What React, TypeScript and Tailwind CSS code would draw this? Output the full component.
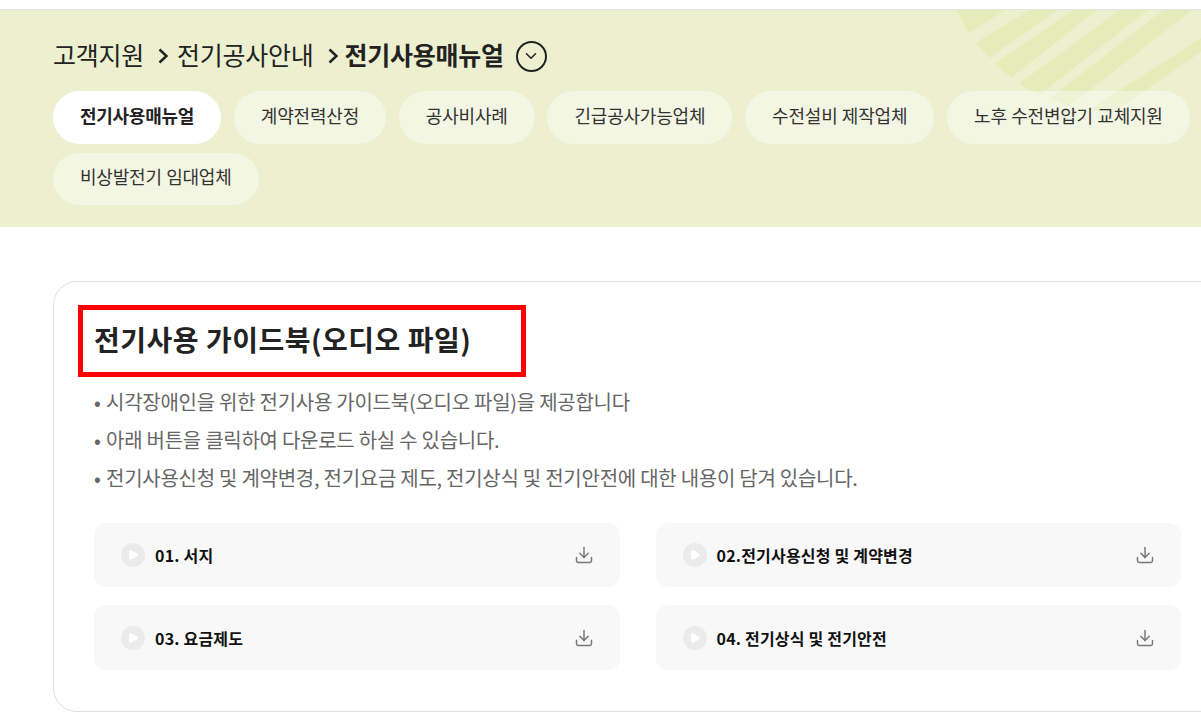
import { ChevronDown, Download, Play } from "lucide-react";

const TABS = [
  "전기사용매뉴얼",
  "계약전력산정",
  "공사비사례",
  "긴급공사가능업체",
  "수전설비 제작업체",
  "노후 수전변압기 교체지원",
  "비상발전기 임대업체",
];

const NOTES = [
  "시각장애인을 위한 전기사용 가이드북(오디오 파일)을 제공합니다",
  "아래 버튼을 클릭하여 다운로드 하실 수 있습니다.",
  "전기사용신청 및 계약변경, 전기요금 제도, 전기상식 및 전기안전에 대한 내용이 담겨 있습니다.",
];

const FILES = ["01. 서지", "02.전기사용신청 및 계약변경", "03. 요금제도", "04. 전기상식 및 전기안전"];

function Stripes() {
  return (
    <svg className="absolute right-0 top-0 h-[120px] w-[251px]" viewBox="950 10 251 120">
      <defs>
        <clipPath id="disc">
          <circle cx="1115" cy="-62" r="174" />
        </clipPath>
      </defs>
      <g clipPath="url(#disc)" fill="#e5ecba">
        <polygon points="940,10 945,45 970,33 1005,10" />
        <polygon points="960,52 977,67 1057,10 1030,10" />
        <polygon points="983,72 1002,85 1097,10 1073,10" />
        <polygon points="1010,90 1033,100 1148,10 1120,10" />
        <polygon points="1020,122 1049,122 1192,10 1163,10" />
        <polygon points="1201,38 1201,52 1105,118 1080,116" />
      </g>
    </svg>
  );
}

function Crumb({ className }: { className: string }) {
  return (
    <svg className={className} width="10" height="16" viewBox="0 0 10 16" fill="none">
      <polyline points="1.5,1.5 8.5,8 1.5,14.5" stroke="#222" strokeWidth="2.5" />
    </svg>
  );
}

export default function App() {
  return (
    <div className="h-[717px] w-[1201px] overflow-hidden bg-white pt-[9px] font-['Noto_Sans_CJK_KR',sans-serif] text-[#222]">
      <section className="relative h-[218px] border-t border-[#e1e3e6] bg-[#ecf0cf] px-[53px] pt-[24px]">
        <Stripes />
        <div className="relative flex h-[44px] items-center text-[25px] tracking-[-0.25px]">
          <span className="pb-[3px]">고객지원</span>
          <Crumb className="ml-[14px] mr-[9px] shrink-0" />
          <span className="pb-[3px]">전기공사안내</span>
          <Crumb className="ml-[14px] mr-[7px] shrink-0" />
          <strong className="pb-[3px] font-bold">전기사용매뉴얼</strong>
          <span className="ml-[12px] flex h-[31px] w-[31px] items-center justify-center rounded-full border-2 border-[#222]">
            <ChevronDown className="h-[18px] w-[18px]" strokeWidth={2} />
          </span>
        </div>
        <div className="relative mt-[13px] flex w-[1148px] flex-wrap gap-x-[12.8px] gap-y-[9px]">
          {TABS.map((tab, i) => (
            <span
              key={tab}
              className={
                i === 0
                  ? "flex h-[52.5px] items-center rounded-full bg-white px-[27px] pb-[4px] text-[18px] font-bold tracking-[-0.27px]"
                  : "flex h-[52.5px] items-center rounded-full bg-white/40 px-[27px] pb-[4px] text-[18px] tracking-[-0.2px] text-[#333] [word-spacing:0.5px]"
              }
            >
              {tab}
            </span>
          ))}
        </div>
      </section>

      <section className="ml-[53px] mt-[54px] h-[431px] w-[1200px] rounded-[24px] border border-[#dfe1e5] pl-[24px] pt-[23px]">
        <h2 className="flex h-[72px] w-[448px] items-center border-[5px] border-[#ff0000] pb-[4px] pl-[11px] text-[28px] font-bold tracking-[0.5px] text-[#222]">
          전기사용 가이드북(오디오 파일)
        </h2>
        <ul className="ml-[15px] mt-[6px] text-[20px] leading-[38px] tracking-[-0.26px] text-[#666]">
          {NOTES.map((note) => (
            <li key={note} className="flex">
              <span className="w-[13px] shrink-0 pl-[1px]">•</span>
              {note}
            </li>
          ))}
        </ul>
        <div className="ml-[16px] mt-[26px] grid w-[1087px] grid-cols-2 grid-rows-[64px_65px] gap-x-[36px] gap-y-[18px]">
          {FILES.map((file) => (
            <div key={file} className="flex items-center rounded-[12px] bg-[#f8f8f8] pl-[27px] pr-[26px]">
              <span className="flex h-[24px] w-[24px] items-center justify-center rounded-full bg-[#ebebeb]">
                <Play className="h-[12px] w-[12px] fill-white text-white" />
              </span>
              <span className="ml-[10px] flex-1 text-[16px] font-bold tracking-[0.2px] text-[#111]">{file}</span>
              <Download className="h-[20px] w-[20px] text-[#777]" strokeWidth={1.75} />
            </div>
          ))}
        </div>
      </section>
    </div>
  );
}
